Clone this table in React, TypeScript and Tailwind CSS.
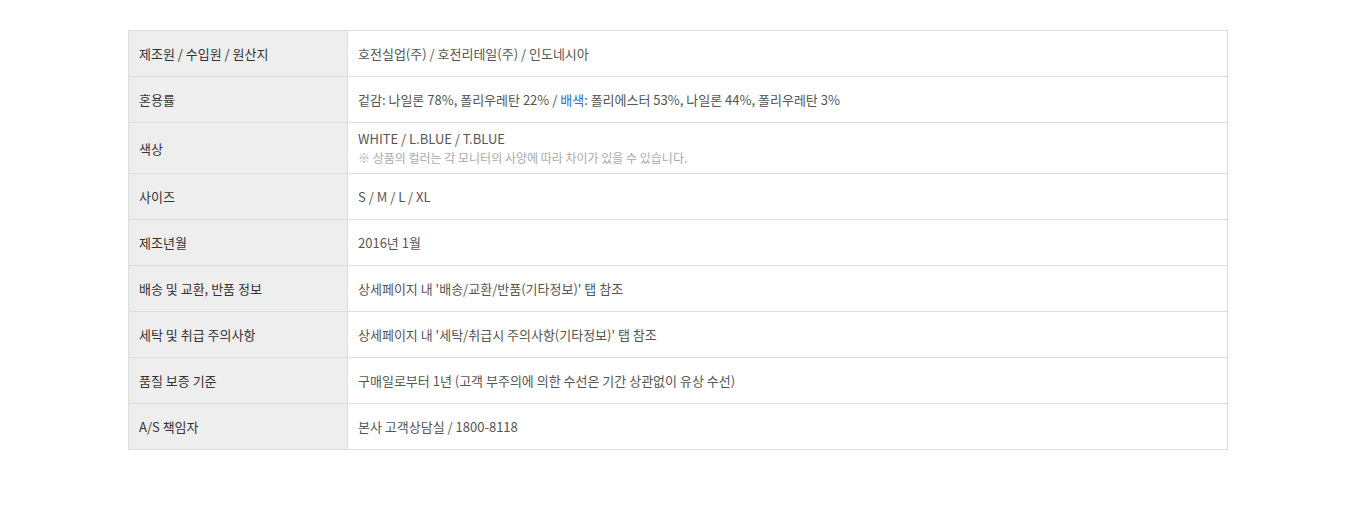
const rows: { label: string; value: React.ReactNode }[] = [
  { label: '제조원 / 수입원 / 원산지', value: '호전실업(주) / 호전리테일(주) / 인도네시아' },
  {
    label: '혼용률',
    value: (
      <>
        겉감: 나일론 78%, 폴리우레탄 22% / <span className="text-[#2e6fc4]">배색</span>: 폴리에스터 53%, 나일론 44%,
        폴리우레탄 3%
      </>
    ),
  },
  {
    label: '색상',
    value: (
      <>
        <p>WHITE / L.BLUE / T.BLUE</p>
        <p className="text-[12px] text-[#aaaaaa]">※ 상품의 컬러는 각 모니터의 사양에 따라 차이가 있을 수 있습니다.</p>
      </>
    ),
  },
  { label: '사이즈', value: 'S / M / L / XL' },
  { label: '제조년월', value: '2016년 1월' },
  { label: '배송 및 교환, 반품 정보', value: "상세페이지 내 '배송/교환/반품(기타정보)' 탭 참조" },
  { label: '세탁 및 취급 주의사항', value: "상세페이지 내 '세탁/취급시 주의사항(기타정보)' 탭 참조" },
  { label: '품질 보증 기준', value: '구매일로부터 1년 (고객 부주의에 의한 수선은 기간 상관없이 유상 수선)' },
  { label: 'A/S 책임자', value: '본사 고객상담실 / 1800-8118' },
];

export default function App() {
  return (
    <div
      className="min-h-[512px] bg-white pl-[128px] pt-[30px]"
      style={{ fontFamily: '"Malgun Gothic", "Noto Sans CJK KR", "Liberation Sans", sans-serif' }}
    >
      <table className="w-[1100px] table-fixed border-collapse border border-[#dddddd] text-[13px] leading-[19px]">
        <tbody>
          {rows.map((row) => (
            <tr key={row.label}>
              <th className="h-[46px] w-[219px] border border-[#dddddd] bg-[#eeeeee] px-[10px] py-[6px] text-left font-normal text-[#333333]">
                {row.label}
              </th>
              <td className="h-[46px] border border-[#dddddd] px-[10px] py-[6px] text-left text-[#555555]">
                {row.value}
              </td>
            </tr>
          ))}
        </tbody>
      </table>
    </div>
  );
}
